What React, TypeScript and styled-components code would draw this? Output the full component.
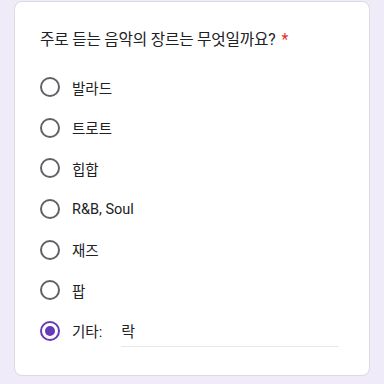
import * as React from 'react'
import styled, { createGlobalStyle } from 'styled-components'

const Global = createGlobalStyle`
  html, body {
    margin: 0;
    padding: 0;
    background: #f0ebf8;
  }
  body {
    font-family: Roboto, 'Noto Sans CJK KR', sans-serif;
  }
`

const Page = styled.div`
  width: 384px;
  height: 384px;
  padding: 1px 0 0 14px;
  box-sizing: border-box;
`

const Card = styled.div`
  width: 356px;
  height: 375px;
  box-sizing: border-box;
  background: #fff;
  border: 1px solid #dadce0;
  border-radius: 8px;
  padding: 28px 24px 0 25px;
`

const Title = styled.div`
  font-size: 15.7px;
  line-height: 20px;
  color: #202124;
  letter-spacing: -0.2px;
  margin-bottom: 17px;

  span {
    color: #d93025;
    margin-left: 6px;
  }
`

const Options = styled.div`
  display: flex;
  flex-direction: column;
`

const Row = styled.label`
  display: flex;
  align-items: center;
  height: 40.6px;
  font-size: 14.5px;
  color: #202124;
`

const Radio = styled.span<{ $checked?: boolean }>`
  width: 20px;
  height: 20px;
  box-sizing: border-box;
  border-radius: 50%;
  border: 2px solid ${p => (p.$checked ? '#673ab7' : '#5f6368')};
  display: flex;
  align-items: center;
  justify-content: center;
  margin-right: 12px;
  flex: none;

  &::after {
    content: '';
    display: ${p => (p.$checked ? 'block' : 'none')};
    width: 10px;
    height: 10px;
    border-radius: 50%;
    background: #673ab7;
  }
`

const OtherInput = styled.div`
  margin-left: 19px;
  width: 218px;
  height: 26px;
  border-bottom: 1px solid #e8e8ec;
  font-size: 15px;
  line-height: 22px;
  color: #202124;
  margin-top: 6px;
  box-sizing: border-box;
`

const choices = ['발라드', '트로트', '힙합', 'R&B, Soul', '재즈', '팝']

export default function App() {
  return (
    <>
      <Global />
      <Page>
        <Card>
          <Title>
            주로 듣는 음악의 장르는 무엇일까요?<span>*</span>
          </Title>
          <Options>
            {choices.map(c => (
              <Row key={c}>
                <Radio />
                {c}
              </Row>
            ))}
            <Row>
              <Radio $checked />
              기타:
              <OtherInput>락</OtherInput>
            </Row>
          </Options>
        </Card>
      </Page>
    </>
  )
}
